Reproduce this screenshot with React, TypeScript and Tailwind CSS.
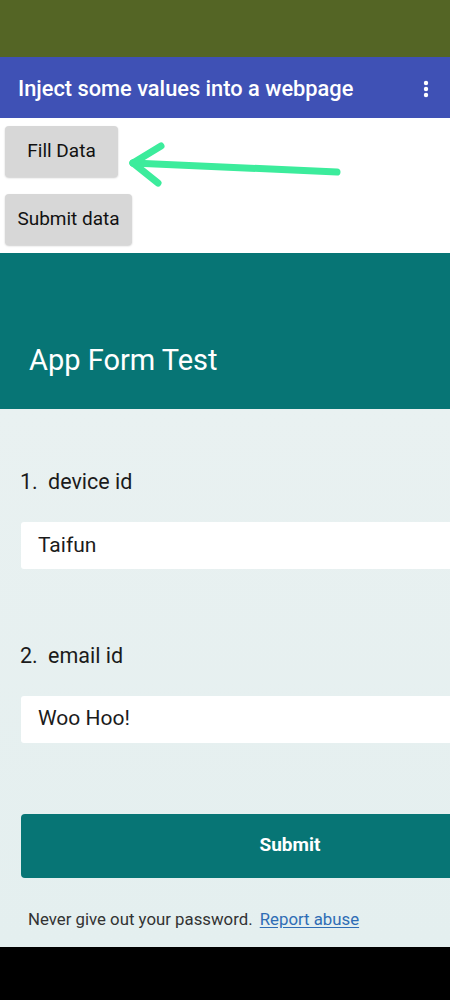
import React from "react";

function MoreIcon() {
  return (
    <svg width="6" height="18" viewBox="0 0 6 18" fill="white">
      <circle cx="3" cy="3" r="2.2" />
      <circle cx="3" cy="9" r="2.2" />
      <circle cx="3" cy="15" r="2.2" />
    </svg>
  );
}

function Arrow() {
  return (
    <svg width="220" height="50" viewBox="0 0 220 50" className="shrink-0">
      <g stroke="#3cec9c" strokeWidth="7" strokeLinecap="round" fill="none">
        <path d="M5 25 L209 34" />
        <path d="M5 25 L33 8" />
        <path d="M5 25 L30 45" />
      </g>
    </svg>
  );
}

export default function App() {
  return (
    <div className="w-[450px] h-[1000px] overflow-hidden flex flex-col font-['Roboto',sans-serif]">
      <div className="h-[57px] bg-[#546525]" />
      <div className="h-[61px] bg-[#3f51b5] flex items-center justify-between pl-[18px] pr-[21px] pt-[3px]">
        <span className="text-white text-[21.8px] font-medium">Inject some values into a webpage</span>
        <MoreIcon />
      </div>
      <div className="h-[135px] bg-white pl-[5px] pt-[8px] flex flex-col gap-[17px]">
        <div className="flex items-start">
          <button className="w-[113px] h-[51px] shrink-0 rounded-[4px] bg-[#d7d7d7] shadow-[0_1px_2px_rgba(0,0,0,0.2)] text-[19px] text-[#111]">
            Fill Data
          </button>
          <div className="ml-[10px] mt-[12px]">
            <Arrow />
          </div>
        </div>
        <button className="w-[127px] h-[51px] rounded-[4px] bg-[#d7d7d7] shadow-[0_1px_2px_rgba(0,0,0,0.2)] text-[19px] text-[#111] -mt-[11px]">
          Submit data
        </button>
      </div>
      <div className="h-[156px] bg-[#077575] flex items-end pb-[27px] pl-[29px]">
        <span className="text-white text-[29px]">App Form Test</span>
      </div>
      <div className="flex-1 bg-gradient-to-b from-[#e9f1f1] to-[#e4efef] pl-[21px] flex flex-col">
        <div className="mt-[57px] flex items-baseline text-[21.5px] text-[#1b1b1b] -ml-[1px]">
          <span className="w-[28px]">1.</span>
          <span>device id</span>
        </div>
        <div className="mt-[24px] h-[47px] w-[480px] bg-white rounded-[3px] flex items-center pl-[17px] text-[21px] text-[#1b1b1b]">
          Taifun
        </div>
        <div className="mt-[71px] flex items-baseline text-[21.5px] text-[#1b1b1b] -ml-[1px]">
          <span className="w-[28px]">2.</span>
          <span>email id</span>
        </div>
        <div className="mt-[23px] h-[47px] w-[480px] bg-white rounded-[3px] flex items-center pl-[17px] text-[21px] text-[#1b1b1b]">
          Woo Hoo!
        </div>
        <button className="mt-[71px] h-[64px] w-[538px] shrink-0 bg-[#077575] rounded-[4px] text-white text-[19px] font-bold">
          Submit
        </button>
        <div className="mt-[29px] pl-[7px] text-[16.8px] text-[#333]">
          Never give out your password.{" "}
          <span className="ml-[3px] text-[#2f6db5] underline underline-offset-2">Report abuse</span>
        </div>
      </div>
      <div className="h-[53px] bg-black" />
    </div>
  );
}
